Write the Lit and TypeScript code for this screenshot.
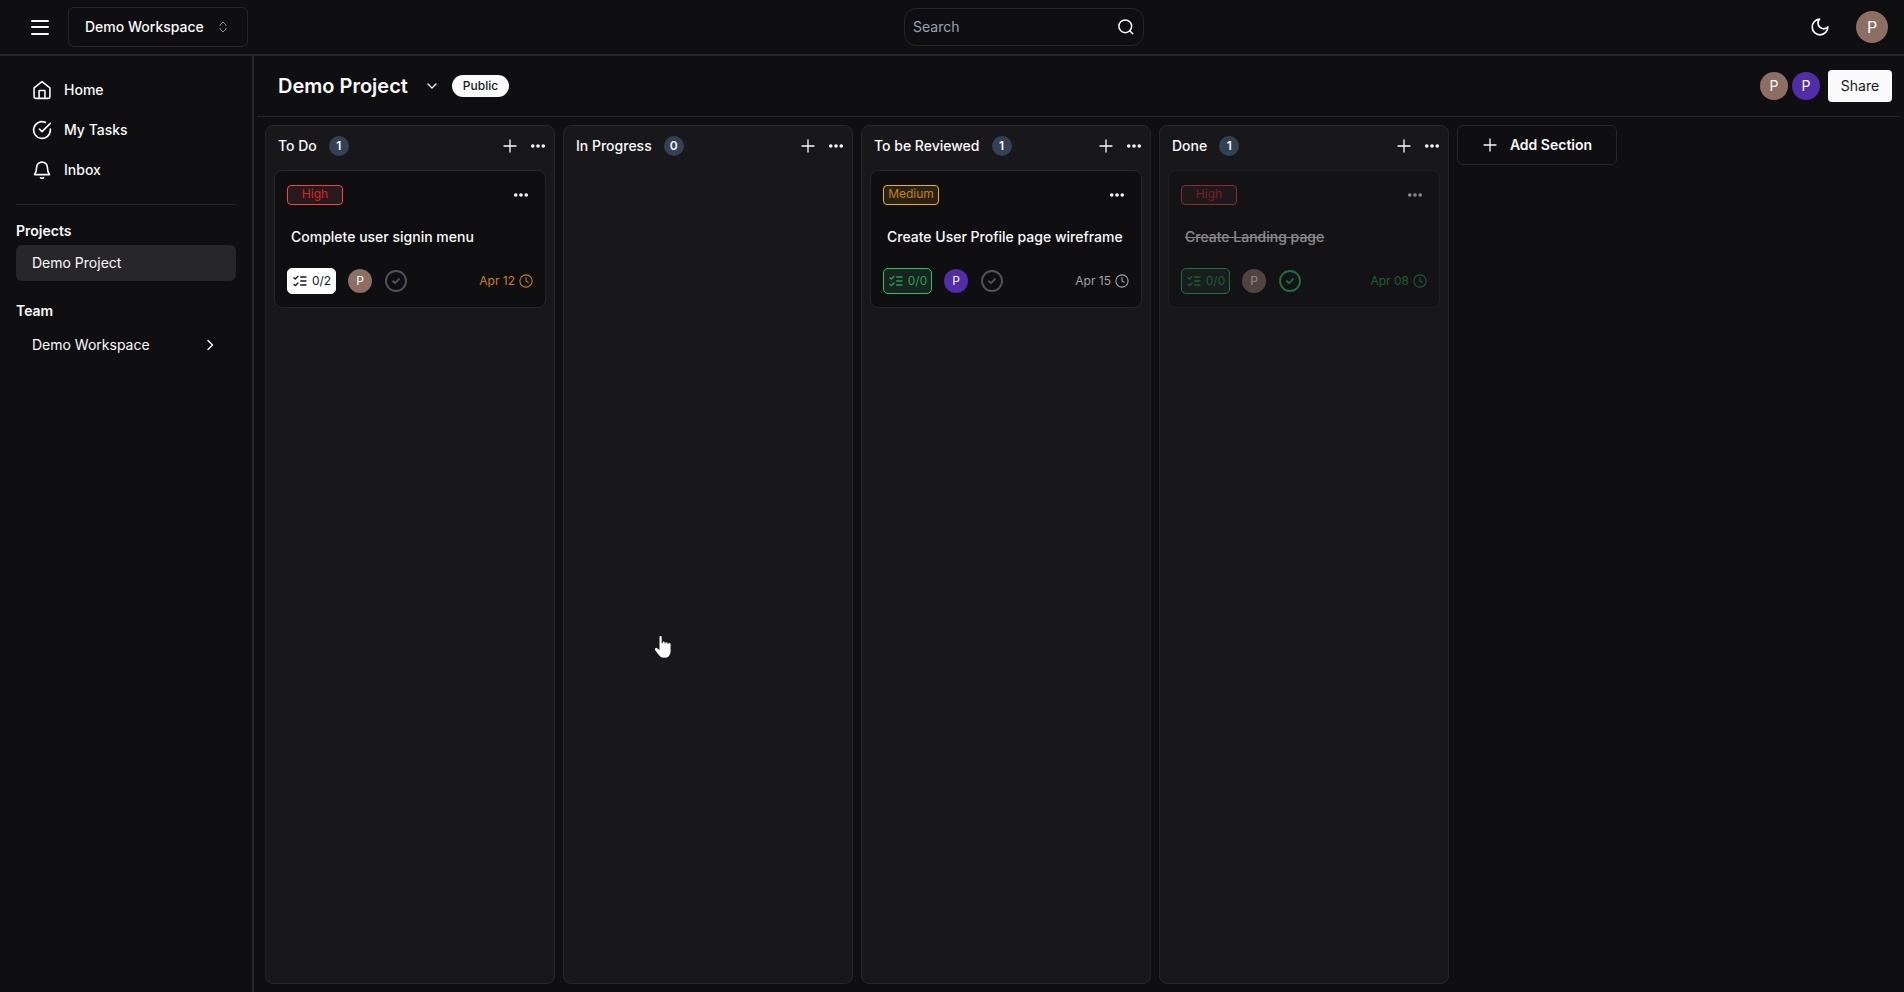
import { LitElement, html, svg, css, nothing } from "lit";
import { customElement, property } from "lit/decorators.js";
import { classMap } from "lit/directives/class-map.js";

type Tone = "brown" | "violet";
interface Task {
  title: string;
  priority: "High" | "Medium";
  checklist: string;
  checklistState: "open" | "clear";
  assignee: Tone;
  due: string;
  dueState: "soon" | "normal" | "done";
  done?: boolean;
}
interface Section {
  name: string;
  tasks: Task[];
}

const sections: Section[] = [
  {
    name: "To Do",
    tasks: [
      { title: "Complete user signin menu", priority: "High", checklist: "0/2", checklistState: "open", assignee: "brown", due: "Apr 12", dueState: "soon" },
    ],
  },
  { name: "In Progress", tasks: [] },
  {
    name: "To be Reviewed",
    tasks: [
      { title: "Create User Profile page wireframe", priority: "Medium", checklist: "0/0", checklistState: "clear", assignee: "violet", due: "Apr 15", dueState: "normal" },
    ],
  },
  {
    name: "Done",
    tasks: [
      { title: "Create Landing page", priority: "High", checklist: "0/0", checklistState: "clear", assignee: "brown", due: "Apr 08", dueState: "done", done: true },
    ],
  },
];

const line = (size: number, width: number, body: unknown, box = "0 0 24 24") => html`<svg
  width=${size} height=${size} viewBox=${box} fill="none" stroke="currentColor"
  stroke-width=${width} stroke-linecap="round" stroke-linejoin="round" aria-hidden="true">${body}</svg>`;

const icons = {
  menu: () => line(24, 2, svg`<path d="M4 6h16M4 12h16M4 19h16" />`),
  sort: () => line(16, 1, svg`<path d="M5 6.5v-.5l3-3 3 3v.5M5 9.5v.5l3 3 3-3v-.5" />`, "0 0 16 16"),
  search: () => line(18, 2, svg`<circle cx="11" cy="11" r="8.5" /><path d="m21 21-4-4" />`),
  moon: () => line(22, 1.9, svg`<path d="M11.500 3.500a6 6 0 0 0 9 8.500 8.500 8.500 0 1 1-9-8.500Z" />`),
  home: () => line(20, 1.9, svg`<path d="M2.500 9.500 12 2l9.500 7.500V20a2 2 0 0 1-2 2h-15a2 2 0 0 1-2-2Z" /><path d="M8.500 22v-9.500h7V22" />`),
  tasks: () => line(20, 2, svg`<path d="M22 11v1a10 10 0 1 1-6-9.150" /><path d="m22 4-10 10-3-3" />`),
  bell: () => line(20, 1.9, svg`<path d="M5.500 9a6.500 6.500 0 0 1 13 0c0 5 .7 6.500 2.500 8.500H3C4.800 15.500 5.500 14 5.500 9Z" /><path d="M10.200 21.300q1.800 1.200 3.600 0" />`),
  right: () => line(16, 1.4, svg`<path d="m6 3.500 4.500 4.500L6 12.500" />`, "0 0 16 16"),
  down: () => line(16, 1.3, svg`<path d="m4 6 4 4 4-4" />`, "0 0 16 16"),
  plus: (size: number) => line(size, 1.3, svg`<path d="M8 2v12M2 8h12" />`, "0 0 16 16"),
  dots: () => html`<svg width="16" height="16" viewBox="0 0 16 16" fill="currentColor" aria-hidden="true">
    <circle cx="2.750" cy="8" r="1.800" /><circle cx="8" cy="8" r="1.800" /><circle cx="13.250" cy="8" r="1.800" />
  </svg>`,
  list: () => line(16, 2, svg`<path d="m3 17 2 2 4-4M3 7l2 2 4-4M13 6h8M13 12h8M13 18h8" />`),
  check: () => line(24, 1.9, svg`<circle cx="12" cy="12" r="10" /><path d="m9 12.200 2 1.900 4-4" />`),
  clock: () => line(14, 1.2, svg`<circle cx="8" cy="8" r="7" /><path d="M8 4v4l2.500 1.500" />`, "0 0 16 16"),
};

const base = css`
  *, *::before, *::after { box-sizing: border-box; }
  button, input { font: inherit; color: inherit; background: none; border: 0; margin: 0; padding: 0; }
  button { cursor: pointer; display: inline-flex; align-items: center; justify-content: center; }
  h1, h2, h3, p, ul { margin: 0; padding: 0; font: inherit; list-style: none; }
  a { color: inherit; text-decoration: none; }
  svg { display: block; flex: none; }
`;

@customElement("user-avatar")
class UserAvatar extends LitElement {
  @property() tone: Tone = "brown";
  @property() size: "sm" | "md" | "lg" = "sm";
  static styles = [base, css`
    :host { display: block; flex: none; }
    .disc { display: grid; place-items: center; border-radius: 50%; color: #fafafa; width: 24px; height: 24px; font-size: 12px; line-height: 16px; }
    .md { width: 28px; height: 28px; font-size: 14px; }
    .lg { width: 32px; height: 32px; font-size: 16px; }
    .brown { background: #8d6e63; }
    .violet { background: #512da8; }
  `];
  render() {
    return html`<span class="disc ${this.size} ${this.tone}">P</span>`;
  }
}

@customElement("task-card")
class TaskCard extends LitElement {
  @property({ attribute: false }) task!: Task;
  static styles = [base, css`
    :host { display: block; }
    .card { display: flex; flex-direction: column; border: 1px solid #27272a; border-radius: 8px; background: #0f0f11; padding: 12px; }
    .card.done { opacity: 0.5; }
    .top { display: flex; align-items: center; justify-content: space-between; height: 24px; }
    .priority { width: 56px; height: 20px; border: 1px solid; border-radius: 4px; font-size: 12px; line-height: 16px; text-align: center; }
    .High { color: #dc2626; border-color: #ef4444; background: #27191c; }
    .Medium { color: #cb7c14; border-color: #eab308; background: #282314; }
    .more { width: 24px; height: 24px; color: #fafafa; }
    .title { padding: 0 4px; margin: 20px 0; font-size: 14px; line-height: 20px; font-weight: 500; }
    .done .title { text-decoration: line-through; }
    .foot { display: flex; align-items: center; gap: 12px; height: 28px; }
    .list { display: flex; align-items: center; justify-content: center; gap: 4px; width: 49px; height: 26px; border: 1px solid; border-radius: 5px; font-size: 12px; line-height: 16px; }
    .open { background: #fff; border-color: #fff; color: #18181b; }
    .clear { background: #17241f; border-color: #22c55e; color: #22a04f; }
    .check { width: 24px; height: 24px; color: #52525b; }
    .done .check { color: #22c55e; }
    .due { display: flex; align-items: center; gap: 4px; margin-left: auto; font-size: 12px; line-height: 16px; }
    .soon { color: #ca8116; }
    .normal { color: #a1a1aa; }
    .ok { color: #22a04f; }
  `];
  render() {
    const t = this.task;
    return html`<article class=${classMap({ card: true, done: !!t.done })}>
      <div class="top">
        <span class="priority ${t.priority}">${t.priority}</span>
        <button class="more" aria-label="Task options">${icons.dots()}</button>
      </div>
      <h3 class="title">${t.title}</h3>
      <div class="foot">
        <span class="list ${t.checklistState}">${icons.list()}${t.checklist}</span>
        <user-avatar tone=${t.assignee}></user-avatar>
        <button class="check" aria-label="Toggle complete">${icons.check()}</button>
        <span class="due ${t.dueState === "done" ? "ok" : t.dueState}">${t.due}${icons.clock()}</span>
      </div>
    </article>`;
  }
}

@customElement("board-section")
class BoardSection extends LitElement {
  @property({ attribute: false }) section!: Section;
  static styles = [base, css`
    :host { display: flex; flex: none; width: 290px; }
    .column { display: flex; flex-direction: column; flex: 1; gap: 8px; min-width: 0; padding: 4px 8px 8px; border: 1px solid #27272a; border-radius: 8px; background: #18181b; }
    .head { display: flex; align-items: center; height: 32px; padding-left: 4px; }
    .name { font-size: 14px; line-height: 20px; font-weight: 500; }
    .count { display: grid; place-items: center; width: 20px; height: 20px; margin-left: 12px; border-radius: 50%; background: #334155; font-size: 12px; line-height: 16px; font-weight: 600; }
    .actions { display: flex; gap: 4px; margin-left: auto; margin-right: -4px; }
    .act { width: 24px; height: 24px; color: #fafafa; }
  `];
  render() {
    const s = this.section;
    return html`<section class="column">
      <header class="head">
        <h2 class="name">${s.name}</h2>
        <span class="count">${s.tasks.length}</span>
        <div class="actions">
          <button class="act" aria-label="Add task">${icons.plus(16)}</button>
          <button class="act" aria-label="Section options">${icons.dots()}</button>
        </div>
      </header>
      ${s.tasks.length ? s.tasks.map((t) => html`<task-card .task=${t}></task-card>`) : nothing}
    </section>`;
  }
}

@customElement("app-root")
class AppRoot extends LitElement {
  static styles = [base, css`
    :host { display: flex; flex-direction: column; position: relative; height: 100vh; overflow: hidden; background: #0f0f11; color: #fafafa; font-family: Inter, "Liberation Sans", sans-serif; font-size: 14px; line-height: 20px; }
    .topbar { display: flex; align-items: center; justify-content: space-between; flex: none; height: 56px; padding: 0 16px; border-bottom: 2px solid #27272a; }
    .group { display: flex; align-items: center; }
    .left { gap: 4px; }
    .right { gap: 16px; }
    .menu { width: 48px; height: 40px; }
    .workspace { justify-content: space-between; width: 180px; height: 40px; padding: 0 16px; border: 1px solid #27272a; border-radius: 6px; font-weight: 500; }
    .workspace svg { color: #8b8b91; }
    .search { display: flex; align-items: center; width: 240px; height: 38px; padding: 0 8px; border: 1px solid #27272a; border-radius: 12px; }
    .field { flex: 1; min-width: 0; outline: none; }
    .field::placeholder { color: #94a3b8; opacity: 1; }
    .theme { width: 40px; height: 40px; }
    .body { display: flex; flex: 1; min-height: 0; }
    .sidebar { flex: none; width: 254px; padding: 14px 16px; border-right: 2px solid #27272a; }
    .nav { padding-bottom: 14px; border-bottom: 1px solid #27272a; }
    .item { display: flex; align-items: center; gap: 12px; height: 40px; padding: 0 16px; font-weight: 500; }
    .heading { font-weight: 600; margin-top: 16px; }
    .row { display: flex; align-items: center; justify-content: space-between; width: 100%; height: 36px; padding: 0 16px; border-radius: 6px; margin-top: 4px; }
    .row.active { background: #27272a; }
    .heading.team { margin-top: 20px; }
    .row.teamrow { margin-top: 6px; padding-right: 18px; }
    .main { display: flex; flex-direction: column; flex: 1; min-width: 0; padding: 0 4px 8px 3px; }
    .project { display: flex; align-items: center; flex: none; height: 61px; padding: 0 8px 0 21px; border-bottom: 1px solid #27272a; }
    .name { font-size: 20px; line-height: 28px; font-weight: 600; }
    .toggle { width: 24px; height: 24px; margin: 0 8px 0 12px; }
    .badge { height: 22px; padding: 3px 11px; border-radius: 11px; background: #fafafa; color: #18181b; font-size: 12px; line-height: 16px; font-weight: 500; }
    .people { display: flex; gap: 4px; margin: 0 8px 0 auto; }
    .share { width: 64px; height: 32px; border-radius: 4px; background: #fafafa; color: #18181b; }
    .board { display: flex; flex: 1; gap: 8px; min-height: 0; padding: 8px 8px 0; overflow-x: auto; }
    .add { flex: none; gap: 12px; width: 160px; height: 40px; border: 1px solid #27272a; border-radius: 6px; font-weight: 600; }
    .pointer { position: absolute; left: 654px; top: 635px; pointer-events: none; }
  `];

  render() {
    return html`
      <header class="topbar">
        <div class="group left">
          <button class="menu" aria-label="Toggle sidebar">${icons.menu()}</button>
          <button class="workspace">Demo Workspace ${icons.sort()}</button>
        </div>
        <form class="search" role="search">
          <input class="field" type="text" placeholder="Search" aria-label="Search" />
          <button type="button" aria-label="Run search">${icons.search()}</button>
        </form>
        <div class="group right">
          <button class="theme" aria-label="Toggle theme">${icons.moon()}</button>
          <button aria-label="Account"><user-avatar size="lg"></user-avatar></button>
        </div>
      </header>
      <div class="body">
        <aside class="sidebar">
          <nav class="nav">
            <a class="item" href="#home">${icons.home()}Home</a>
            <a class="item" href="#tasks">${icons.tasks()}My Tasks</a>
            <a class="item" href="#inbox">${icons.bell()}Inbox</a>
          </nav>
          <h2 class="heading">Projects</h2>
          <a class="row active" href="#project">Demo Project</a>
          <h2 class="heading team">Team</h2>
          <button class="row teamrow">Demo Workspace ${icons.right()}</button>
        </aside>
        <main class="main">
          <header class="project">
            <h1 class="name">Demo Project</h1>
            <button class="toggle" aria-label="Project options">${icons.down()}</button>
            <span class="badge">Public</span>
            <div class="people">
              <user-avatar size="md"></user-avatar>
              <user-avatar size="md" tone="violet"></user-avatar>
            </div>
            <button class="share">Share</button>
          </header>
          <div class="board">
            ${sections.map((s) => html`<board-section .section=${s}></board-section>`)}
            <button class="add">${icons.plus(16)}Add Section</button>
          </div>
        </main>
      </div>
      <svg class="pointer" width="18" height="24" viewBox="0 0 18 24" aria-hidden="true">
        <path fill="#fff" d="M5.500 1.800a1.200 1.200 0 0 1 2.200 0V8l1 .2V6.800q1.300-.8 2 .3v1.300l.8.2V7.600q1.300-.8 2 .3v1.200l.8.2v-1q1.600-.6 2.300.7v7.500q0 3-2 5-1.500 1.200-4.500 1.200-3.500 0-5-2.500L1 15Q.300 13 2.300 12.800L5.500 15Z" />
      </svg>
    `;
  }
}
